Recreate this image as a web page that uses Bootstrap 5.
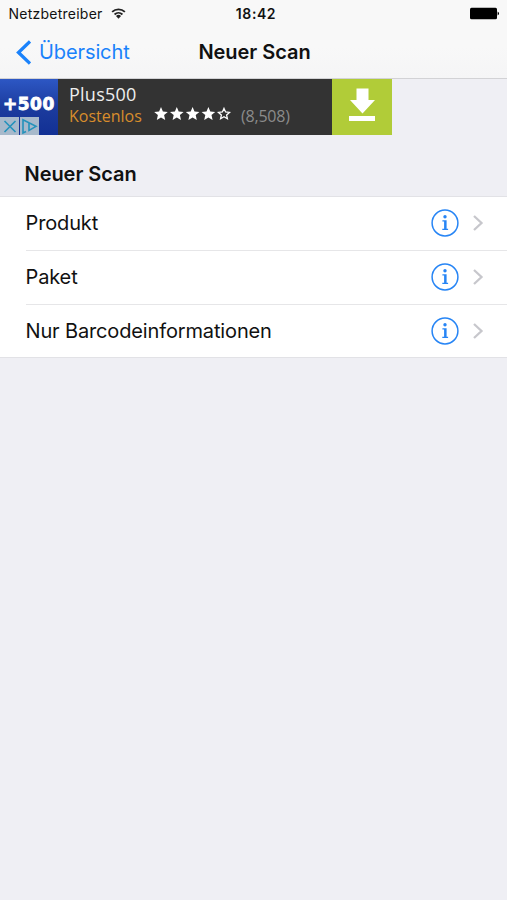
<!DOCTYPE html>
<html lang="de">
<head>
<meta charset="utf-8">
<meta name="viewport" content="width=device-width, initial-scale=1">
<title>Neuer Scan</title>
<link href="https://cdn.jsdelivr.net/npm/bootstrap@5.3.0/dist/css/bootstrap.min.css" rel="stylesheet">
<style>
body{background:#efeff4;font-family:Inter,"Liberation Sans",sans-serif;color:#111;min-height:900px;overflow:hidden}
.top-area{height:79px;background:linear-gradient(#f8f8f8 60%,#f5f5f6);border-bottom:1px solid #d2d2d5}
.status-bar{height:27px;font-size:14px;line-height:27px;padding:0 8px 0 9px}
.carrier{letter-spacing:.24px;margin-left:-.5px}
.clock{font-weight:600;letter-spacing:.6px;padding-left:4px}
.nav-row{height:51px;line-height:51px;padding-right:14px}
.back-link{color:#1a82fb;font-size:20px;letter-spacing:-.1px;padding-left:16px}
.page-title{font-size:20px;font-weight:600;letter-spacing:-.05px}
.ad{width:392px;height:56px;background:#333;font-family:"Open Sans","Noto Sans",sans-serif}
.ad-logo{width:58px;background:linear-gradient(#2d57c4,#1c3c9e 50%,#123094);color:#fff}
.ad-logo-text{font:bold 17px/20px "DejaVu Sans",sans-serif;top:15px;left:3px;-webkit-text-stroke:.8px #fff;letter-spacing:.5px}
.ad-marks{left:0;bottom:0}
.ad-copy{padding-left:11px}
.ad-name{font-size:18px;line-height:24px;color:#eee;padding-top:3px;letter-spacing:.25px}
.ad-price{font-size:16px;line-height:19px;color:#d88d2c;width:84px}
.ad-count{font-size:16px;line-height:19px;color:#8b8b8b;padding-left:9px;letter-spacing:-.2px}
.ad-get{width:60px;background:#b1cc38}
.section-head{height:61px;font-size:20px;line-height:25px;font-weight:600;padding:27px 0 0 24.5px;letter-spacing:-.05px}
.scan-list{border-top:1px solid #e2e2e6;border-bottom:1px solid #e2e2e6;background:#fff}
.scan-item{height:54px;padding:0 23.5px 1.5px 0;margin-left:25.5px;font-size:20px;letter-spacing:-.14px}
.scan-item:last-child{height:52px;padding-bottom:0}
.scan-item+.scan-item{box-shadow:0 -1px #e6e6e8}
.chev{margin-left:13px}
</style>
<script src="https://cdn.jsdelivr.net/npm/bootstrap@5.3.0/dist/js/bootstrap.bundle.min.js"></script>
</head>
<body>
<svg class="d-none">
<symbol id="info" viewBox="0 0 28 28"><circle cx="14" cy="14" r="12.9" fill="none" stroke="#2785f5" stroke-width="1.5"/><circle cx="14" cy="7.7" r="1.7" fill="#2785f5"/><path d="M11.4 11.3h4.2v8.5h1.5v1.3h-5.8v-1.3h1.8v-7.2h-1.7z" fill="#2785f5"/></symbol>
<symbol id="chev" viewBox="0 0 12 18"><path d="M2 2l7.500 7L2 16" fill="none" stroke="#c7c7cc" stroke-width="2.3"/></symbol>
<symbol id="star" viewBox="0 0 16 16"><path d="M8 1l1.9 4.5 4.9.4-3.7 3.2 1.1 4.8L8 11.4l-4.2 2.5 1.1-4.8L1.2 5.900l4.900-.4z"/></symbol>
<symbol id="star-open" viewBox="0 0 16 16"><path d="M8 2.400l1.600 3.600 3.900.4-2.900 2.600.8 3.800L8 10.800l-3.400 2 .8-3.800-2.900-2.600 3.900-.4z" fill="none" stroke="#fff" stroke-width="1.300"/></symbol>
</svg>
<header class="top-area">
<div class="status-bar row g-0">
<div class="col d-flex align-items-center"><span class="carrier">Netzbetreiber</span>
<svg class="ms-2" width="15" height="13" viewBox="0 0 16 13"><g fill="none" stroke="#222" stroke-width="2"><path d="M1.2 4.8a10 10 0 0 1 13.6 0"/><path d="M3.8 7.5a6.2 6.2 0 0 1 8.4 0"/></g><path d="M5.3 9.2a4 4 0 0 1 5.4 0L8 12z" fill="#222"/></svg></div>
<div class="col-auto clock">18:42</div>
<div class="col d-flex align-items-center justify-content-end pe-0"><svg width="30" height="13" viewBox="0 0 30 13"><rect x="1" y=".7" width="27" height="11.6" rx="1.5"/><path d="M28.6 4.5q3 2 0 4z"/></svg></div>
</div>
<nav class="nav-row row g-0">
<a class="col back-link d-flex align-items-center text-decoration-none" href="#"><svg class="me-2" width="15" height="26" viewBox="0 0 15 26"><path d="M14 1.500L2.500 12.500 14 23.500" fill="none" stroke="#1a82fb" stroke-width="3.3"/></svg>Übersicht</a>
<div class="col-auto page-title">Neuer Scan</div>
<div class="col"></div>
</nav>
</header>
<aside class="ad d-flex">
<div class="ad-logo position-relative">
<span class="ad-logo-text position-absolute">+500</span>
<svg class="ad-marks position-absolute" width="39" height="18" viewBox="0 0 39 18"><path d="M0 0h19v18H0zM20 0h19v18H20z" fill="#a7b9cb"/><g fill="none" stroke="#2492bb" stroke-width="1.6"><path d="M4.5 4l11 11m0-11l-11 11"/><path d="M26 14.5L23 16V2.800l13 6.600-7 4V6.500"/></g></svg>
</div>
<div class="ad-copy flex-grow-1">
<div class="ad-name">Plus500</div>
<div class="d-flex align-items-center"><span class="ad-price">Kostenlos</span>
<svg class="mb-1" width="79" height="16" viewBox="0 0 79 16" fill="#fff"><use href="#star" width="16" height="16"/><use href="#star" x="15.8" width="16" height="16"/><use href="#star" x="31.6" width="16" height="16"/><use href="#star" x="47.4" width="16" height="16"/><use href="#star-open" x="63" width="16" height="16"/></svg>
<span class="ad-count">(8,508)</span></div>
</div>
<div class="ad-get d-flex justify-content-center"><svg width="28" height="56" viewBox="0 0 28 56" fill="#fff"><path d="M8.500 9.500h12V21h6.500L14.500 34.500 2 21h6.500zM1 37h26v5H1z"/></svg></div>
</aside>
<main>
<h1 class="section-head m-0">Neuer Scan</h1>
<div class="scan-list">
<div class="scan-item d-flex align-items-center"><span class="me-auto">Produkt</span><svg width="28" height="28"><use href="#info"/></svg><svg class="chev" width="12" height="18"><use href="#chev"/></svg></div>
<div class="scan-item d-flex align-items-center"><span class="me-auto">Paket</span><svg width="28" height="28"><use href="#info"/></svg><svg class="chev" width="12" height="18"><use href="#chev"/></svg></div>
<div class="scan-item d-flex align-items-center"><span class="me-auto">Nur Barcodeinformationen</span><svg width="28" height="28"><use href="#info"/></svg><svg class="chev" width="12" height="18"><use href="#chev"/></svg></div>
</div>
</main>
</body>
</html>
